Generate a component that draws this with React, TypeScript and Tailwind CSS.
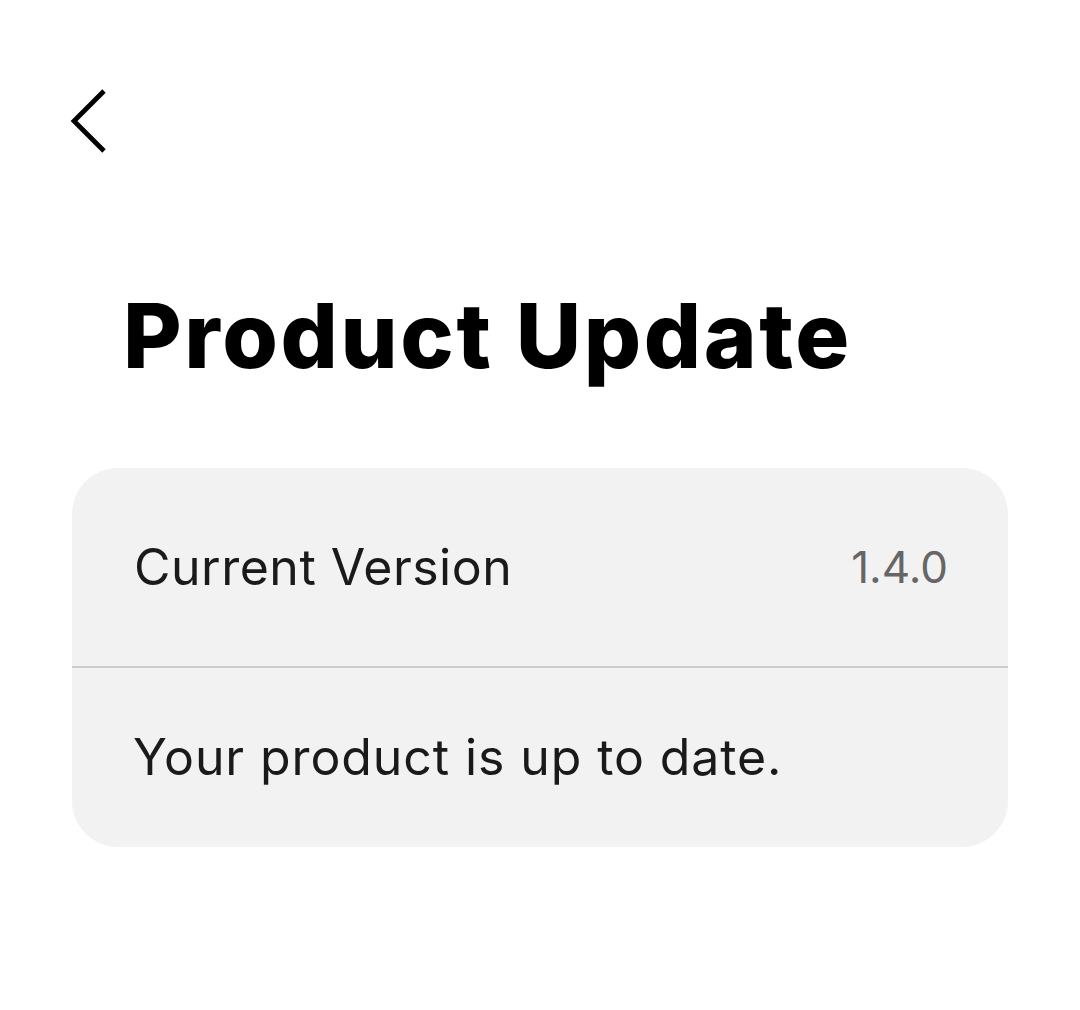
import React from "react";

const font = { fontFamily: "Inter, 'Open Sans', sans-serif" };

function BackChevron() {
  return (
    <svg width="40" height="66" viewBox="0 0 40 66" fill="none" className="block">
      <path d="M35 3 L5 33 L35 63" stroke="#000" strokeWidth="4.8" strokeLinecap="butt" strokeLinejoin="miter" />
    </svg>
  );
}

export default function App() {
  return (
    <div className="w-[1080px] h-[1010px] bg-white" style={font}>
      <div className="pt-[88px] pl-[69px]">
        <button className="block">
          <BackChevron />
        </button>
      </div>

      <h1 className="mt-[127px] pl-[123px] text-[90px] leading-[110px] font-extrabold text-black tracking-[2.6px]">
        Product Update
      </h1>

      <div className="mt-[77px] mx-[72px] rounded-[46px] bg-[#f2f2f2] overflow-hidden">
        <div className="h-[198px] flex items-center justify-between pl-[62px] pr-[60px]">
          <span className="text-[50px] tracking-[0.5px] text-[#1a1a1a]">Current Version</span>
          <span className="text-[44px] text-[#666]">1.4.0</span>
        </div>
        <div className="h-[2px] bg-[#cccccc]" />
        <div className="h-[179px] flex items-center pl-[61px]">
          <span className="text-[50px] tracking-[0.9px] text-[#1a1a1a]">Your product is up to date.</span>
        </div>
      </div>
    </div>
  );
}
